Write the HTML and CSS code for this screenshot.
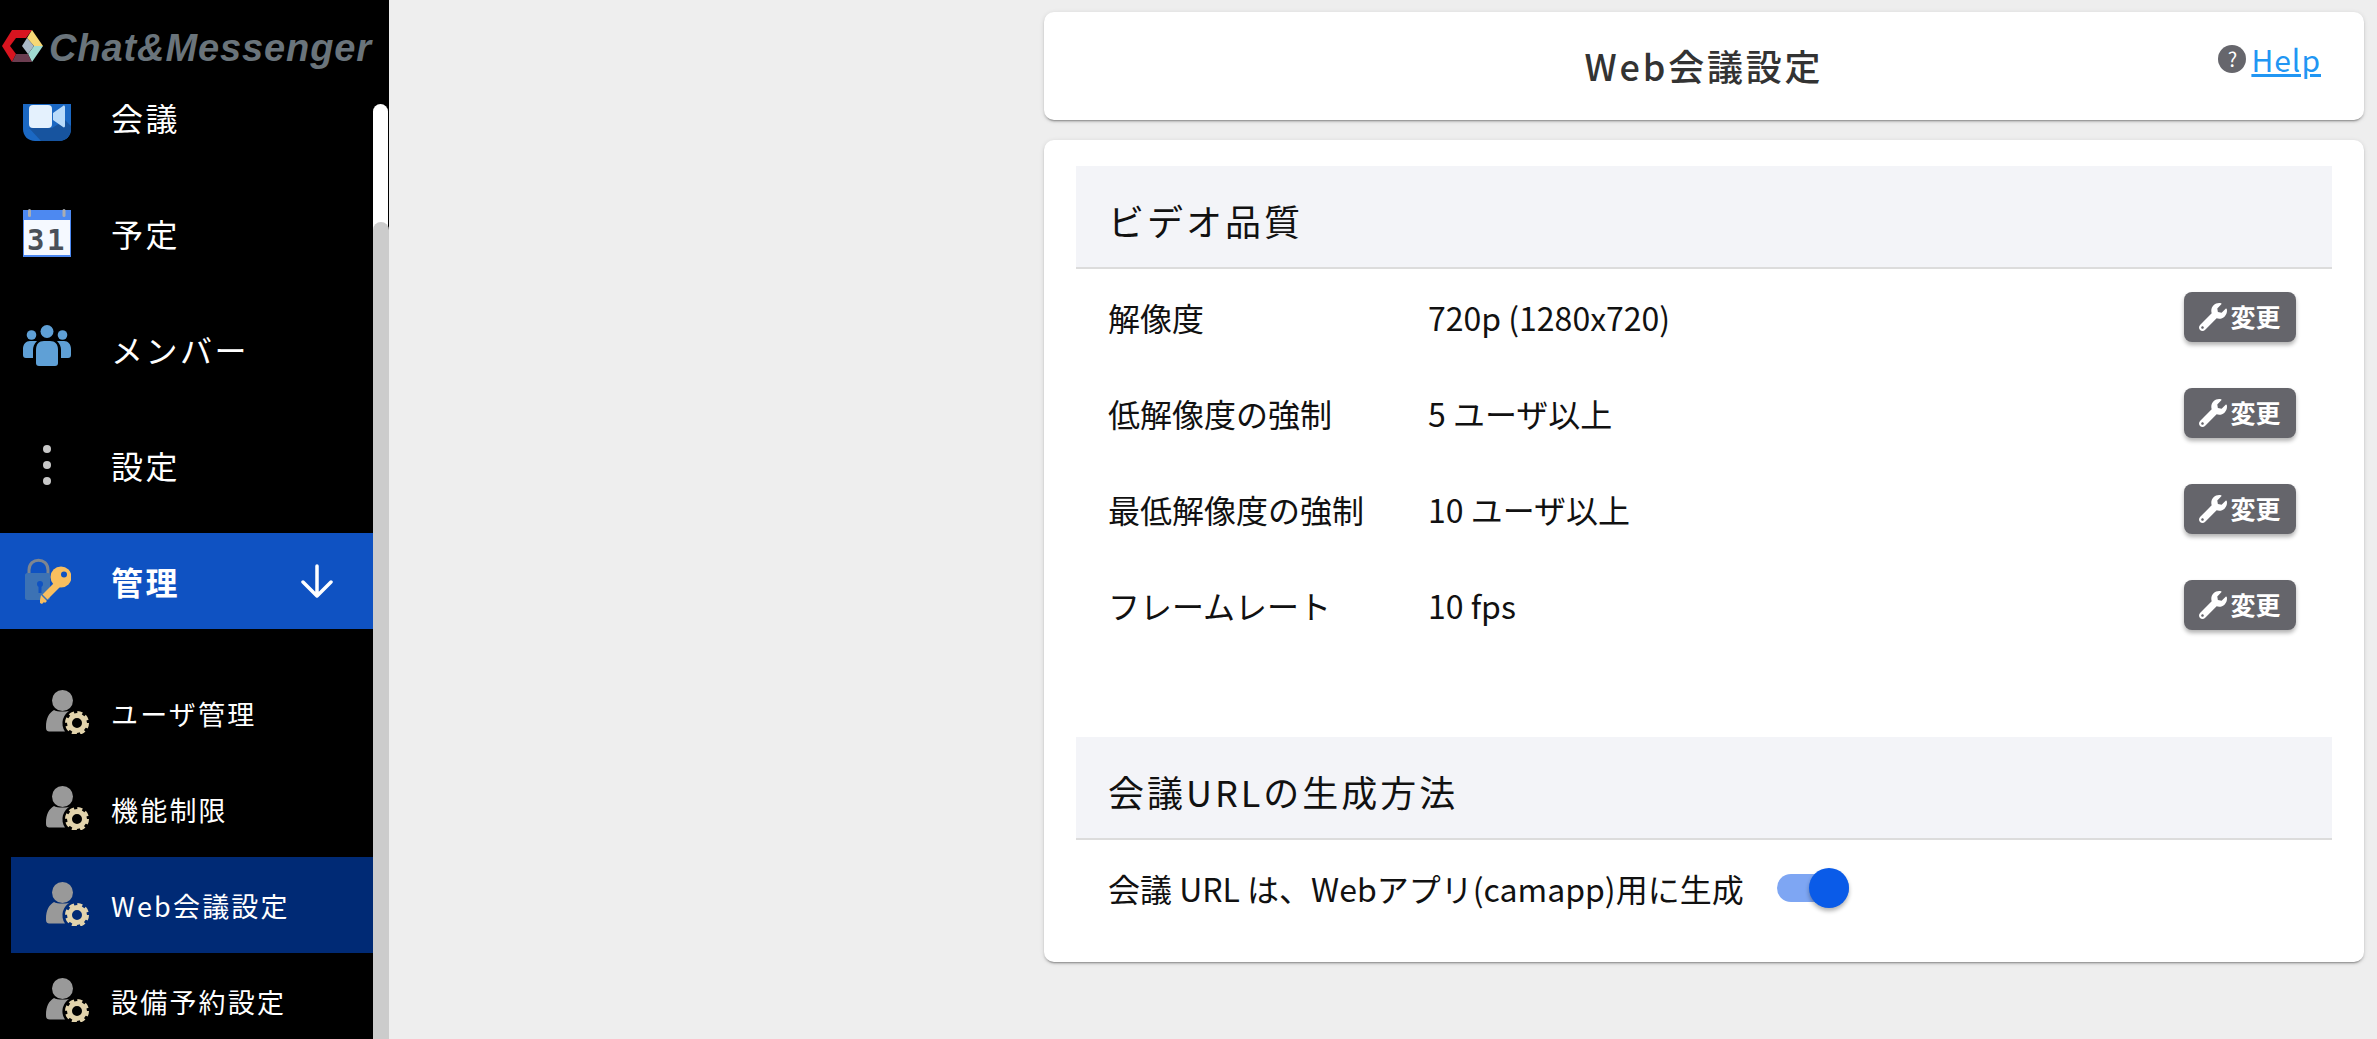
FILE: index.html
```html
<!DOCTYPE html>
<html lang="ja">
<head>
<meta charset="utf-8">
<title>Web会議設定</title>
<link rel="stylesheet" href="styles.css">
</head>
<body>
<svg class="defs" width="0" height="0" aria-hidden="true">
  <symbol id="admin" viewBox="0 0 44 44">
    <circle cx="16.5" cy="10.5" r="10.5" fill="#999"/>
    <path d="M0 37c0-9 3-14 8-17 3 2 14 2 17 0A14.5 14.5 0 0 0 19 41.500H4c-3 0-4-1-4-4.500z" fill="#999"/>
    <circle cx="31" cy="33" r="7.5" fill="none" stroke="#e2d3ac" stroke-width="5"/>
    <circle cx="31" cy="33" r="10.5" fill="none" stroke="#e2d3ac" stroke-width="3" stroke-dasharray="5 3.25"/>
  </symbol>
  <symbol id="wrench" viewBox="0 0 512 512">
    <path fill="#fff" d="M507.73 109.1c-2.24-9.03-13.54-12.09-20.12-5.51l-74.36 74.36-67.88-11.31-11.31-67.88 74.36-74.36c6.62-6.62 3.43-17.9-5.66-20.16-47.38-11.74-99.55.91-136.58 37.93-39.64 39.64-50.55 97.1-34.05 147.2L18.74 402.76c-24.99 24.99-24.99 65.51 0 90.5 24.99 24.99 65.51 24.99 90.5 0l213.21-213.21c50.12 16.71 107.47 5.68 147.37-34.22 37.07-37.07 49.7-89.32 37.91-136.73zM64 472c-13.25 0-24-10.75-24-24 0-13.26 10.75-24 24-24s24 10.74 24 24c0 13.25-10.75 24-24 24z"/>
  </symbol>
</svg>

<aside class="sidebar">
  <header class="brand">
    <svg class="brand-mark" viewBox="0 0 43 34" width="43" height="34">
      <polygon fill="#d9141f" points="1,16 11,0 31,0 25,8 15,8 9,16 15,24 11,32"/>
      <polygon fill="#f6d875" points="31,0 42,16 33,16 26,8"/>
      <polygon fill="#9fdcd2" points="42,16 31,32 27,24 33,16"/>
      <polygon fill="#6b3d50" points="15,24 27,24 31,32 11,32"/>
      <polygon fill="#a9b9c6" points="26,8 33,16 27,24 21,16"/>
    </svg>
    <span class="brand-name">Chat&amp;Messenger</span>
  </header>
  <div class="side-body">
    <nav class="nav">
      <ul class="nav-main">
        <li class="nav-item">
          <svg class="nav-icon" viewBox="0 0 48 48" width="48" height="48">
            <path fill="#1b68c3" d="M0 0h48v36c0 7-5 12-12 12H12C5 48 0 43 0 36z"/>
            <path fill="#17549f" d="M6 35h23l13-8 6 6v3c0 7-5 12-12 12H18z"/>
            <rect x="6" y="12" width="23" height="23" rx="4" fill="#e4f1fd"/>
            <path fill="#b9dbfa" d="M30 20l10-7c1-1 2 0 2 1v19c0 1-1 2-2 1l-10-7z"/>
          </svg>
          <span class="nav-text">会議</span>
        </li>
        <li class="nav-item">
          <svg class="nav-icon" viewBox="0 0 48 48" width="48" height="48">
            <rect x="0" y="1" width="48" height="47" fill="#4d89f1"/>
            <rect x="1" y="11" width="46" height="35" fill="#f5f9ff"/>
            <rect x="5" y="0" width="3" height="8" rx="1.5" fill="#a9adb3"/>
            <rect x="39.500" y="0" width="3" height="8" rx="1.5" fill="#a9adb3"/>
            <text class="cal-day" x="24" y="41" text-anchor="middle">31</text>
          </svg>
          <span class="nav-text">予定</span>
        </li>
        <li class="nav-item">
          <svg class="nav-icon" viewBox="0 0 48 48" width="48" height="48">
            <g fill="#5fa0d6">
              <circle cx="8.500" cy="10" r="4.800"/>
              <circle cx="39.500" cy="10" r="4.800"/>
              <path d="M0 24c0-5 3-8 7-8h7c-3 3-4 6-4 9v8H3c-2 0-3-1-3-3zM48 24c0-5-3-8-7-8h-7c3 3 4 6 4 9v8h7c2 0 3-1 3-3z"/>
              <circle cx="24" cy="6.500" r="6.500"/>
              <path d="M13 25c0-6 3-9 8-9h6c5 0 8 3 8 9v13c0 2-1 3-3 3H16c-2 0-3-1-3-3z"/>
            </g>
          </svg>
          <span class="nav-text">メンバー</span>
        </li>
        <li class="nav-item">
          <svg class="nav-icon" viewBox="0 0 48 48" width="48" height="48">
            <g fill="#c8c8c8">
              <circle cx="24" cy="8" r="4"/>
              <circle cx="24" cy="24" r="4"/>
              <circle cx="24" cy="40" r="4"/>
            </g>
          </svg>
          <span class="nav-text">設定</span>
        </li>
        <li class="nav-item nav-item-active">
          <svg class="nav-icon" viewBox="0 0 48 48" width="48" height="48">
            <path fill="none" stroke="#7d8590" stroke-width="3" d="M6 18v-5c0-13 19-13 19 0v5"/>
            <path fill="#3c72b4" d="M4 16h21c1 0 2 1 2 2v23c0 1-1 2-2 2H4c-1 0-2-1-2-2V18c0-1 1-2 2-2z"/>
            <circle cx="17" cy="27" r="3" fill="#0f52c2"/>
            <path fill="none" stroke="#0f52c2" stroke-width="3" d="M17 27v9"/>
            <path fill="none" stroke="#f8be5f" stroke-width="7" d="M36 26 22 40"/>
            <path fill="#f8be5f" d="M18 38l6 6-2 2-1-1-2 2-2-1v-3z"/>
            <circle cx="38" cy="20" r="10.500" fill="#f8be5f"/>
            <circle cx="41" cy="17.500" r="3" fill="#0f52c2"/>
          </svg>
          <span class="nav-text">管理</span>
          <svg class="nav-arrow" viewBox="0 0 32 34" width="32" height="34">
            <path fill="none" stroke="#fff" stroke-width="3.500" stroke-linecap="round" stroke-linejoin="round" d="M16 2v30M2 18l14 14 14-14"/>
          </svg>
        </li>
      </ul>
      <ul class="nav-sub">
        <li class="sub-item"><svg class="sub-icon" width="44" height="44"><use href="#admin"/></svg><span>ユーザ管理</span></li>
        <li class="sub-item"><svg class="sub-icon" width="44" height="44"><use href="#admin"/></svg><span>機能制限</span></li>
        <li class="sub-item sub-item-active"><svg class="sub-icon" width="44" height="44"><use href="#admin"/></svg><span>Web会議設定</span></li>
        <li class="sub-item"><svg class="sub-icon" width="44" height="44"><use href="#admin"/></svg><span>設備予約設定</span></li>
      </ul>
    </nav>
    <div class="scrollbar">
      <div class="scroll-thumb"></div>
      <div class="scroll-rest"></div>
    </div>
  </div>
</aside>

<main class="main">
  <section class="card title-card">
    <span></span>
    <h1 class="title">Web会議設定</h1>
    <div class="help">
      <span class="help-icon">?</span>
      <a class="help-link" href="#">Help</a>
    </div>
  </section>

  <section class="card settings-card">
    <h2 class="section-head">ビデオ品質</h2>
    <div class="row">
      <div class="row-label">解像度</div>
      <div class="row-value">720p (1280x720)</div>
      <button class="change-btn"><svg class="wrench" width="28" height="28"><use href="#wrench"/></svg><span class="btn-text">変更</span></button>
    </div>
    <div class="row">
      <div class="row-label">低解像度の強制</div>
      <div class="row-value">5 ユーザ以上</div>
      <button class="change-btn"><svg class="wrench" width="28" height="28"><use href="#wrench"/></svg><span class="btn-text">変更</span></button>
    </div>
    <div class="row">
      <div class="row-label">最低解像度の強制</div>
      <div class="row-value">10 ユーザ以上</div>
      <button class="change-btn"><svg class="wrench" width="28" height="28"><use href="#wrench"/></svg><span class="btn-text">変更</span></button>
    </div>
    <div class="row">
      <div class="row-label">フレームレート</div>
      <div class="row-value">10 fps</div>
      <button class="change-btn"><svg class="wrench" width="28" height="28"><use href="#wrench"/></svg><span class="btn-text">変更</span></button>
    </div>

    <h2 class="section-head section-head-second">会議URLの生成方法</h2>
    <div class="row row-toggle">
      <span class="toggle-label">会議 URL は、Webアプリ(camapp)用に生成</span>
      <span class="toggle"><span class="toggle-knob"></span></span>
    </div>
  </section>
</main>
</body>
</html>
```
FILE: styles.css
```css
* { box-sizing: border-box; }

html, body {
  margin: 0;
  height: 100%;
  overflow: hidden;
}

body {
  display: flex;
  background: #eeeeee;
  color: #111;
  font-family: "Noto Sans CJK JP", "Noto Sans", sans-serif;
}

.defs { position: absolute; }

ul { list-style: none; margin: 0; padding: 0; }

/* Sidebar */
.sidebar {
  width: 389px;
  height: 100vh;
  flex: none;
  display: flex;
  flex-direction: column;
  background: #000;
  color: #fff;
}

.brand {
  height: 104px;
  flex: none;
  padding: 30px 0 0 1px;
  display: flex;
  align-items: flex-start;
  gap: 5px;
}

.brand-name {
  font-family: "Liberation Sans", Arial, sans-serif;
  font-style: italic;
  font-weight: 700;
  font-size: 38px;
  line-height: 36px;
  letter-spacing: 0.900px;
  color: #6a747b;
}

.side-body {
  flex: 1;
  min-height: 0;
  display: flex;
}

.nav {
  width: 373px;
  flex: none;
  overflow: hidden;
}

.nav-main {
  margin-top: -35px;
  display: flex;
  flex-direction: column;
  gap: 20px;
}

.nav-item {
  height: 96px;
  display: flex;
  align-items: center;
  padding-left: 23px;
  font-size: 32px;
  letter-spacing: 2.500px;
}

.nav-text { padding-bottom: 1px; }

.nav-icon { flex: none; margin-right: 40px; }

.nav-item-active {
  background: #0f52c2;
  font-weight: 700;
}

.nav-arrow { margin-left: auto; margin-right: 40px; }

.nav-sub {
  margin: 36px 0 0 11px;
}

.sub-item {
  height: 96px;
  display: flex;
  align-items: center;
  padding-left: 35px;
  font-size: 27px;
  letter-spacing: 2.200px;
}

.sub-icon { flex: none; margin: 0 21px 2px 0; }

.sub-item-active { background: #002a75; }

.scrollbar {
  width: 16px;
  flex: none;
  display: flex;
  flex-direction: column;
}

.scroll-thumb {
  height: 128px;
  flex: none;
  width: 15px;
  background: #fff;
  border-radius: 8px 8px 0 0;
}

.scroll-rest {
  flex: 1;
  margin-top: -10px;
  background: #cccccc;
  border-radius: 8px 8px 0 0;
  position: relative;
}

/* Main */
.main {
  width: 1320px;
  margin: 0 13px 0 auto;
  padding-top: 12px;
  display: flex;
  flex-direction: column;
  gap: 20px;
}

.card {
  background: #fff;
  border-radius: 10px;
  box-shadow: 0 3px 1px -2px rgba(0,0,0,.2), 0 2px 2px 0 rgba(0,0,0,.14), 0 1px 5px 0 rgba(0,0,0,.12);
}

.title-card {
  height: 108px;
  display: grid;
  grid-template-columns: 1fr auto 1fr;
  align-items: center;
}

.title {
  margin: 0;
  padding-bottom: 2px;
  font-size: 36px;
  font-weight: 500;
  letter-spacing: 2.800px;
  color: #333;
}

.help {
  justify-self: end;
  padding: 0 43px 14px 0;
  display: flex;
  align-items: center;
  gap: 5px;
}

.help-icon {
  width: 28px;
  height: 28px;
  border-radius: 50%;
  background: #66666c;
  color: #fff;
  font-size: 20px;
  line-height: 28px;
  text-align: center;
}

.help-link {
  color: #2196f3;
  font-size: 30px;
  letter-spacing: 1px;
}

.settings-card { padding: 26px 32px; }

.section-head {
  margin: 0;
  height: 103px;
  padding: 6px 0 0 32px;
  display: flex;
  align-items: center;
  background: #f3f4f8;
  border-bottom: 2px solid #dcdcdc;
  font-size: 36px;
  font-weight: 400;
  letter-spacing: 3px;
}

.section-head-second { margin-top: 84px; }

.row {
  height: 96px;
  display: flex;
  align-items: center;
  padding: 0 36px 0 32px;
  font-size: 32px;
  letter-spacing: 0;
}

.row-label { width: 320px; flex: none; }

.row-value { flex: 1; }

.change-btn {
  width: 112px;
  height: 50px;
  padding: 0;
  border: 0;
  border-radius: 8px;
  background: #65656b;
  color: #fff;
  font-family: inherit;
  font-size: 25px;
  font-weight: 700;
  display: flex;
  align-items: center;
  justify-content: center;
  gap: 3px;
  box-shadow: 0 3px 4px rgba(0,0,0,.3);
}

.btn-text { padding-bottom: 2px; }

.wrench { flex: none; }

.cal-day {
  font-family: "DejaVu Sans Mono", monospace;
  font-weight: 700;
  font-size: 29px;
  fill: #4a5058;
}

.toggle {
  margin-left: 33px;
  width: 72px;
  height: 28px;
  border-radius: 14px;
  background: #7ea6f3;
  position: relative;
}

.toggle-knob {
  position: absolute;
  right: 0;
  top: -6px;
  width: 40px;
  height: 40px;
  border-radius: 50%;
  background: #0a5be8;
  box-shadow: 0 3px 4px rgba(0,0,0,.3);
}
```
